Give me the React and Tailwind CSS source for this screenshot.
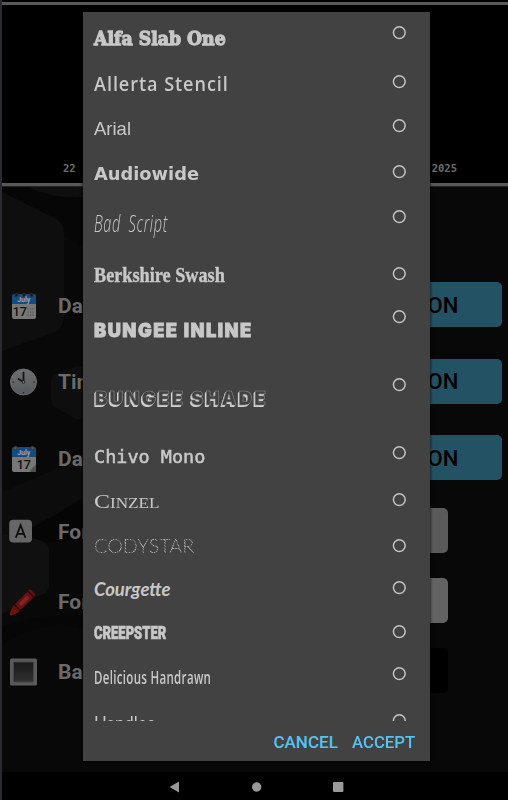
import { useLayoutEffect, useRef, useState } from "react";

// A label drawn at its natural size, then squeezed or stretched to a set width.
function Fit({ width, className, children }) {
  const ref = useRef(null);
  const [scale, setScale] = useState(1);
  useLayoutEffect(() => {
    setScale(width / ref.current.offsetWidth);
  }, [width]);
  return (
    <span
      ref={ref}
      className={`inline-block origin-left whitespace-nowrap leading-[24px] ${className}`}
      style={{ transform: `scaleX(${scale})` }}
    >
      {children}
    </span>
  );
}

const fonts = [
  { name: "Alfa Slab One", w: 132, row: "h-[49.5px]", pad: "mt-0", cls: "font-['DejaVu_Serif'] font-bold text-[19px] [-webkit-text-stroke:1.3px_#c8c8c8]" },
  { name: "Allerta Stencil", w: 135, row: "h-[44px]", pad: "mt-[-3.5px]", cls: "font-['Open_Sans'] font-semibold text-[19px] tracking-[1px]" },
  { name: "Arial", w: 37, row: "h-[46px]", pad: "mt-[-2px]", cls: "font-['Liberation_Sans'] text-[19px]" },
  { name: "Audiowide", w: 105, row: "h-[44.5px]", pad: "mt-[-3px]", cls: "font-['DejaVu_Sans'] font-bold text-[18px]" },
  { name: "Bad Script", w: 74, row: "h-[57px]", pad: "mt-[1px]", cls: "font-['Open_Sans'] font-light italic text-[23px] tracking-[1px] [word-spacing:5px]" },
  { name: "Berkshire Swash", w: 131, row: "h-[43.5px]", pad: "mt-[-4px]", cls: "font-['Liberation_Serif'] font-bold text-[21px] [-webkit-text-stroke:0.4px_#c8c8c8]" },
  { name: "BUNGEE INLINE", w: 159, row: "h-[67.5px]", pad: "mt-[8px]", cls: "font-['Inter'] font-black text-[18.5px] tracking-[1.5px] [-webkit-text-stroke:0.8px_#c8c8c8]" },
  { name: "BUNGEE SHADE", w: 173, row: "h-[68px]", pad: "mt-[9.5px] pl-[1px]", cls: "font-['Inter'] font-black text-[19px] tracking-[2px] text-[#424242] [-webkit-text-stroke:0.6px_#8a8a8a] [text-shadow:-1px_1px_0_#d0d0d0,-1.5px_1.5px_0_#d0d0d0]" },
  { name: "Chivo Mono", w: 111, row: "h-[47.5px]", pad: "mt-[-0.7px]", cls: "font-['DejaVu_Sans_Mono'] text-[17.5px] [-webkit-text-stroke:0.5px_#c8c8c8]" },
  { name: "Cinzel", w: 65, row: "h-[45.5px]", pad: "mt-[-3.5px]", cls: "font-['Liberation_Serif'] text-[19.5px] [font-variant:small-caps]" },
  { name: "CODYSTAR", w: 100, row: "h-[42.5px]", pad: "mt-[-5.5px]", cls: "font-['Lato'] font-light text-[20px] text-transparent bg-clip-text bg-[repeating-linear-gradient(45deg,#bcbcbc_0_1px,#666666_1px_2px)]" },
  { name: "Courgette", w: 77, row: "h-[43.5px]", pad: "mt-[-4.2px]", cls: "font-['Lato'] font-bold italic text-[18.5px]" },
  { name: "CREEPSTER", w: 72, row: "h-[42px]", pad: "mt-[-4px]", cls: "font-['Roboto'] font-black text-[19px] [-webkit-text-stroke:0.7px_#c8c8c8]" },
  { name: "Delicious Handrawn", w: 117, row: "h-[47px]", pad: "mt-[-2px]", cls: "font-['Open_Sans'] font-semibold text-[18px] tracking-[0.5px]" },
  { name: "Handlee", w: 61, row: "h-[47px]", pad: "mt-[-2.5px]", cls: "font-['Lato'] text-[19px]" },
];

function FontRow({ font }) {
  return (
    <div className={`flex items-start justify-between shrink-0 pl-[11px] pr-[23px] ${font.row}`}>
      <div className={`flex ${font.pad}`}>
        <Fit width={font.w} className={font.cls}>{font.name}</Fit>
      </div>
      <svg className="w-[14px] h-[14px] shrink-0 overflow-visible" viewBox="0 0 14 14">
        <circle cx="6.3" cy="6.6" r="5.9" fill="none" stroke="#c3c3c3" strokeWidth="1.5" />
      </svg>
    </div>
  );
}

function Calendar({ curl }) {
  return (
    <svg width="28" height="28" viewBox="0 0 28 28">
      <rect x="3" y="3" width="24" height="24" rx="2" fill="#777" />
      <path d="M3 12V4a2 2 0 0 1 2-2h20a2 2 0 0 1 2 2v8z" fill="#124c80" />
      {(curl ? [6.5, 23.5] : [7.5, 15, 22.5]).map((x) => (
        <circle key={x} cx={x} cy="3" r="1.7" fill={curl ? "#555" : "#141c24"} stroke="#333" strokeWidth=".8" />
      ))}
      <text x="14.8" y="9.8" textAnchor="middle" fontSize="7" fontWeight="700" fontFamily="Roboto, sans-serif" fill="#9aa5af">July</text>
      <text x={curl ? 14.8 : 10.8} y="24.3" textAnchor="middle" fontSize="12.5" fontWeight="500" fontFamily="Roboto, sans-serif" fill="#111">17</text>
      {curl ? (
        <path d="M27 20v7h-6c1-3 3-5 6-7z" fill="#505050" />
      ) : (
        <path d="M18.5 17h7M18.5 20h7M18.5 23h7" stroke="#444" strokeDasharray="1 1.5" />
      )}
    </svg>
  );
}

function Clock() {
  return (
    <svg width="28" height="28" viewBox="0 0 28 28">
      <defs>
        <linearGradient id="face" x1="0" y1="0" x2="0" y2="1">
          <stop offset="0" stopColor="#707070" />
          <stop offset="1" stopColor="#55595d" />
        </linearGradient>
      </defs>
      <circle cx="14.5" cy="14" r="13" fill="url(#face)" stroke="#68696b" strokeWidth="1" />
      <path d="M14.5 14V4.5M14.5 14l-5-3" stroke="#151515" strokeWidth="1.8" strokeLinecap="round" />
      <circle cx="14.5" cy="14" r="1.4" fill="#777" stroke="#151515" strokeWidth=".7" />
      <path d="M14.5 24v1.2M3.6 14h1.2M24.4 14h1.2" stroke="#222" strokeWidth="1.3" />
    </svg>
  );
}

function LetterA() {
  return (
    <svg width="28" height="28" viewBox="0 0 28 28">
      <rect x="0.2" y="1.7" width="22.8" height="22.8" rx="4" fill="#666" />
      <path d="M6.8 19.8 11.6 7.2l4.8 12.6M8.4 15.8h6.4" fill="none" stroke="#0c0c0c" strokeWidth="1.8" />
    </svg>
  );
}

function Crayon() {
  return (
    <svg width="28" height="28" viewBox="0 0 28 28">
      <g transform="translate(1 27) rotate(-45)">
        <path d="M0-1 8-4v8L0 1z" fill="#6e1512" />
        <rect x="7.5" y="-4.2" width="25" height="8.4" rx="1.5" fill="#65110f" />
        <path d="M10.5-4.2v8.4M29.5-4.2v8.4" stroke="#260605" strokeWidth="1.5" />
        <rect x="14" y="-2" width="12" height="4" rx="2" fill="#7d2522" />
      </g>
    </svg>
  );
}

function Square() {
  return (
    <svg width="28" height="28" viewBox="0 0 28 28">
      <defs>
        <linearGradient id="sq" x1="0" y1="0" x2="0" y2="1">
          <stop offset="0" stopColor="#1a1a1a" />
          <stop offset="1" stopColor="#303030" />
        </linearGradient>
      </defs>
      <rect x="1" y="0.5" width="27" height="27" rx="1.5" fill="#5a5a5a" />
      <rect x="4.5" y="4" width="20" height="20" rx="1" fill="url(#sq)" stroke="#444" />
    </svg>
  );
}

function Setting({ icon, label, gap, button }) {
  return (
    <div className={`flex items-center shrink-0 h-[45px] pl-[7px] ${gap}`}>
      <div className="w-[49px] shrink-0 pt-[2px]">{icon}</div>
      <span className="w-[326px] pt-[4px] font-['Roboto'] font-bold text-[21px] text-[#6a6a6a]">{label}</span>
      {button}
    </div>
  );
}

const on = (
  <div className="w-[118px] h-[45px] rounded-[5px] bg-[#245265] flex items-center justify-center pt-[1px] font-['Roboto'] font-medium text-[22px] text-black">
    ON
  </div>
);

export default function App() {
  return (
    <div className="relative w-[508px] h-[800px] overflow-hidden bg-[#080808] border-l-2 border-[#2b2a2f] flex flex-col">
      <div className="h-[187px] shrink-0 bg-black flex flex-col">
        <div className="mt-[2px] h-[3px] bg-[#585858]" />
        <div className="flex-1 flex items-end justify-between pl-[61px] pr-[51px] pb-[8px] font-['DejaVu_Sans_Mono'] font-bold text-[10.5px] leading-[14px] text-[#6c6c6c]">
          <span>22</span>
          <span>2025</span>
        </div>
        <div className="h-[3px] bg-[#585858]" />
        <div className="h-[1px] bg-[#222]" />
      </div>

      <div className="relative flex-1 flex flex-col">
        <svg className="absolute inset-0" width="506" height="585" viewBox="0 0 506 585">
          <path d="M0 0h82v60L0 15z" fill="#060606" />
          <path d="M25 0h57v10Q50 12 25 0z" fill="#0e0e0e" />
          <path d="M0 5 54 32Q62 37 62 46v84q0 10-9 15L0 164z" fill="#0e0e0e" />
          <path d="M49 195q0-6 5-8l20-8h8v53h-8l-21-12q-4-2-4-7z" fill="#0e0e0e" />
          <path d="M0 305V347l22-1 60-36v-40z" fill="#0c0c0c" />
          <path d="M22 346 82 312v40L40 355z" fill="#050505" />
          <path d="M0 347 22 348 40 354q7 3 7 9v36q0 5-6 8L0 427z" fill="#101010" />
          <path d="M0 440q40-15 82-10v12Q40 430 0 458z" fill="#060606" />
        </svg>
        <div className="relative flex flex-col">
          <Setting icon={<Calendar />} label="Day" gap="mt-[95px]" button={on} />
          <Setting icon={<Clock />} label="Time" gap="mt-[31.5px]" button={on} />
          <Setting icon={<Calendar curl />} label="Date" gap="mt-[31.5px]" button={on} />
          <Setting icon={<LetterA />} label="Font" gap="mt-[28px]" button={<div className="w-[64px] h-[45px] rounded-[5px] bg-[#5a5a5a]" />} />
          <Setting icon={<Crayon />} label="Font" gap="mt-[25px]" button={<div className="w-[64px] h-[45px] rounded-[5px] bg-[#636363]" />} />
          <Setting icon={<Square />} label="Back" gap="mt-[25px]" button={<div className="w-[64px] h-[45px] rounded-[5px] bg-black" />} />
        </div>
      </div>

      <div className="h-[28px] shrink-0 bg-black flex items-center pl-[167px] pt-[1px]">
        <svg width="176" height="12" viewBox="0 0 176 12">
          <path d="M0.5 6 10 0.6v10.8z" fill="#999" />
          <circle cx="87.7" cy="6" r="4.7" fill="#999" />
          <rect x="164" y="1" width="10.4" height="10" rx="1" fill="#999" />
        </svg>
      </div>

      <div className="absolute left-[81px] top-[12px] w-[347px] h-[749px] bg-[#424242] flex flex-col shadow-[0_0_3px_#000]">
        <div className="h-[709px] shrink-0 overflow-hidden flex flex-col pt-[13.8px] text-[#c8c8c8]">
          {fonts.map((f) => (
            <FontRow key={f.name} font={f} />
          ))}
        </div>
        <div className="flex-1 flex items-center pl-[190.5px] pt-[3px] font-['Roboto'] font-medium text-[17px] text-[#56c3f2]">
          <div className="w-[78px]"><Fit width={64} className="">CANCEL</Fit></div>
          <div className="w-[63px]"><Fit width={63} className="">ACCEPT</Fit></div>
        </div>
      </div>
    </div>
  );
}
